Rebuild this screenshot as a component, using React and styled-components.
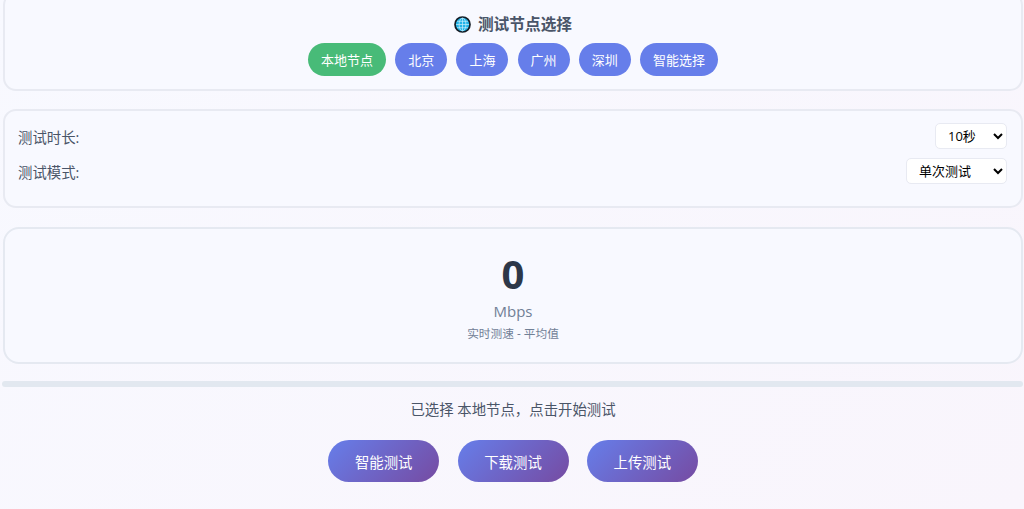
import styled, { createGlobalStyle } from "styled-components";

const GlobalStyle = createGlobalStyle`
  html, body {
    margin: 0;
    padding: 0;
  }
  body {
    height: 509px;
    overflow: hidden;
    background: linear-gradient(135deg, #f8f9ff 0%, #f9f5fc 100%);
    font-family: "Open Sans", "Noto Sans CJK SC", sans-serif;
  }
`;

const Page = styled.div`
  display: flex;
  flex-direction: column;
  padding: 0 1px 0 3px;
  height: 509px;
  box-sizing: border-box;
`;

const Card = styled.section`
  box-sizing: border-box;
  background: #f8f9ff;
  border: 2px solid #e8eaf2;
  border-radius: 13px;
  height: ${(p) => p.$height}px;
  margin-bottom: ${(p) => p.$gap}px;
`;

const NodeCard = styled(Card)`
  margin-top: -8px;
  padding-top: 19px;
  display: flex;
  flex-direction: column;
  align-items: center;
  gap: 7px;
`;

const Title = styled.h3`
  margin: 0;
  display: flex;
  align-items: center;
  gap: 7px;
  height: 23px;
  font-size: 15.7px;
  line-height: 23px;
  font-weight: 700;
  color: #4a5568;
`;

const Nodes = styled.div`
  display: flex;
  gap: 9.2px;
`;

const Pill = styled.button`
  height: 33px;
  padding: 0 13px;
  border: 0;
  border-radius: 17px;
  background: ${(p) => (p.$active ? "#48bb78" : "#667eea")};
  color: #fff;
  font: 13px "Open Sans", "Noto Sans CJK SC", sans-serif;
`;

const Settings = styled(Card)`
  padding: 12px 14px 0 13px;
  display: flex;
  flex-direction: column;
  gap: 9px;
`;

const Row = styled.div`
  display: flex;
  justify-content: space-between;
  align-items: center;
  height: 26px;
`;

const Label = styled.label`
  font-size: 14.4px;
  color: #4a5568;
`;

const Select = styled.select`
  height: 26px;
  width: ${(p) => p.$width}px;
  padding: 0 4px 0 8px;
  border: 1px solid #e8eaf2;
  border-radius: 5px;
  background: #fff;
  color: #000;
  font: 13px "Open Sans", "Noto Sans CJK SC", sans-serif;
`;

const Speed = styled(Card)`
  display: flex;
  flex-direction: column;
  align-items: center;
  padding-top: 20px;
  border-color: #e5e9f1;
  border-radius: 16px;
`;

const Value = styled.div`
  font-size: 40px;
  line-height: 50px;
  font-weight: 700;
  color: #2d3748;
`;

const Unit = styled.div`
  margin-top: 2px;
  font-size: 15px;
  line-height: 20px;
  color: #718096;
`;

const Note = styled.div`
  margin-top: 4px;
  font-size: 11.7px;
  line-height: 16px;
  color: #718096;
`;

const Progress = styled.div`
  height: 6px;
  margin-left: -1px;
  border-radius: 3px;
  background: #e2e8f0;
`;

const Status = styled.p`
  margin: 13px 0 0;
  text-align: center;
  font-size: 14.4px;
  line-height: 20px;
  color: #4a5568;
`;

const Actions = styled.div`
  display: flex;
  justify-content: center;
  gap: 18.3px;
  margin-top: 20px;
`;

const ActionButton = styled.button`
  width: 111px;
  height: 42px;
  border: 0;
  border-radius: 21px;
  background: linear-gradient(135deg, #667eea 0%, #764ba2 100%);
  color: #fff;
  font: 14.4px "Open Sans", "Noto Sans CJK SC", sans-serif;
`;

function GlobeIcon() {
  return (
    <svg width="17" height="17" viewBox="0 0 17 17" aria-hidden="true">
      <circle cx="8.5" cy="8.5" r="7.5" fill="#22b4e8" stroke="#141d26" strokeWidth="1.7" />
      <g fill="none" stroke="#c8eefa" strokeWidth="0.7">
        <ellipse cx="8.5" cy="8.5" rx="3.4" ry="6.4" />
        <path d="M8.5 2v13M2 8.5h13M3 5.3h11M3 11.7h11" />
      </g>
    </svg>
  );
}

const nodes = ["本地节点", "北京", "上海", "广州", "深圳", "智能选择"];
const actions = ["智能测试", "下载测试", "上传测试"];

export default function App() {
  return (
    <>
      <GlobalStyle />
      <Page>
        <NodeCard $height={99} $gap={18}>
          <Title>
            <GlobeIcon />
            测试节点选择
          </Title>
          <Nodes>
            {nodes.map((name, i) => (
              <Pill key={name} $active={i === 0}>
                {name}
              </Pill>
            ))}
          </Nodes>
        </NodeCard>

        <Settings $height={99} $gap={19}>
          <Row>
            <Label>测试时长:</Label>
            <Select $width={72} defaultValue="10秒">
              <option>10秒</option>
              <option>30秒</option>
            </Select>
          </Row>
          <Row>
            <Label>测试模式:</Label>
            <Select $width={101} defaultValue="单次测试">
              <option>单次测试</option>
              <option>连续测试</option>
            </Select>
          </Row>
        </Settings>

        <Speed $height={137} $gap={17}>
          <Value>0</Value>
          <Unit>Mbps</Unit>
          <Note>实时测速 - 平均值</Note>
        </Speed>

        <Progress />
        <Status>已选择 本地节点，点击开始测试</Status>

        <Actions>
          {actions.map((label) => (
            <ActionButton key={label}>{label}</ActionButton>
          ))}
        </Actions>
      </Page>
    </>
  );
}
